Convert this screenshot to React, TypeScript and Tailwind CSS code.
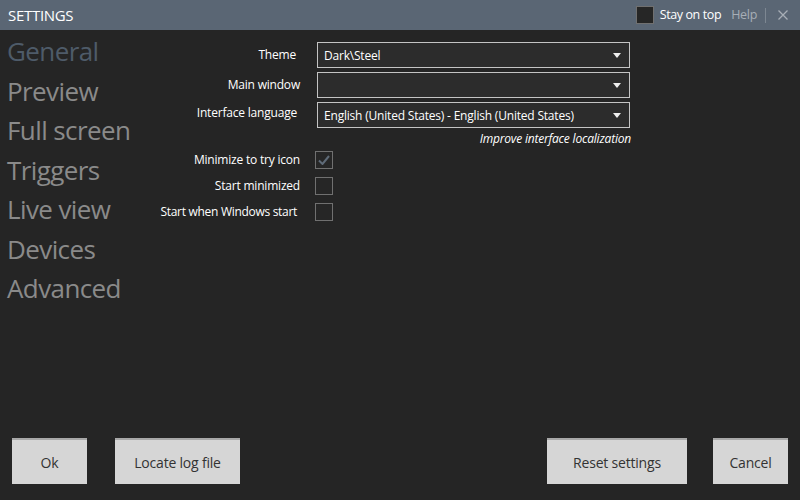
import React from "react";

const font = { fontFamily: '"Open Sans", "Noto Sans", sans-serif' };

function Select({ value }: { value: string }) {
  return (
    <div className="w-[313px] h-[26px] border border-[#c4c4c4] bg-[#2c2c2c] flex items-center justify-between pl-[6px] pr-[8px]">
      <span className="text-[12px] text-white tracking-[-0.2px] pt-[1px]">{value}</span>
      <svg width="8" height="5" viewBox="0 0 8 5"><path d="M0 0H8L4 5Z" fill="#eee" /></svg>
    </div>
  );
}

function Check({ checked }: { checked?: boolean }) {
  return (
    <div className="w-[18px] h-[18px] border border-[#707070] bg-[#262626] flex items-center justify-center">
      {checked && (
        <svg width="12" height="10" viewBox="0 0 12 10">
          <path d="M1 5.5L4.5 9L11 1" stroke="#5f6b78" strokeWidth="2" fill="none" />
        </svg>
      )}
    </div>
  );
}

export default function App() {
  const nav = ["General", "Preview", "Full screen", "Triggers", "Live view", "Devices", "Advanced"];
  return (
    <div className="w-[800px] h-[500px] bg-[#252525] flex flex-col overflow-hidden" style={font}>
      <div className="h-[30px] bg-[#5a6674] flex items-center pl-[8px] pr-[12px] shrink-0">
        <span className="text-[15px] text-white tracking-[-0.3px]">SETTINGS</span>
        <div className="ml-auto flex items-center">
          <div className="w-[18px] h-[18px] bg-[#262626] border border-[#707070]" />
          <span className="ml-[6px] text-[12.5px] text-white tracking-[-0.4px]">Stay on top</span>
          <span className="ml-[10px] text-[12.5px] text-[#a7aeb6] tracking-[-0.3px]">Help</span>
          <div className="ml-[8px] w-px h-[15px] bg-[#7d8792]" />
          <svg className="ml-[12px]" width="10" height="10" viewBox="0 0 10 10">
            <path d="M0.5 0.5L9.5 9.5M9.5 0.5L0.5 9.5" stroke="#a7aeb6" strokeWidth="1.3" />
          </svg>
        </div>
      </div>
      <div className="flex-1 flex">
        <div className="w-[150px] pl-[7px] pt-[2px] flex flex-col">
          {nav.map((n, i) => (
            <div
              key={n}
              className={`h-[39.5px] leading-[39.5px] text-[26px] tracking-[-0.6px] ${i === 0 ? "text-[#4e5b69]" : "text-[#8a8a8a]"}`}
            >
              {n}
            </div>
          ))}
        </div>
        <div className="flex flex-col pt-[12px]">
          <div className="grid grid-cols-[150px_313px] gap-x-[17px] gap-y-[4px] items-center">
            <div className="text-right text-[12px] text-white tracking-[-0.2px] pr-[4px]">Theme</div>
            <Select value="Dark\Steel" />
            <div className="text-right text-[12px] text-white tracking-[-0.2px]">Main window</div>
            <Select value="" />
            <div className="text-right text-[12px] text-white tracking-[-0.2px] pr-[3px] self-start pt-[2px]">Interface language</div>
            <Select value="English (United States) - English (United States)" />
          </div>
          <div className="text-right text-[12px] italic text-white tracking-[-0.2px] w-[481px] mt-[2px]">
            Improve interface localization
          </div>
          <div className="grid grid-cols-[150px_18px] gap-x-[15px] gap-y-[8px] items-center mt-[3px]">
            <div className="text-right text-[12px] text-white tracking-[-0.2px]">Minimize to try icon</div>
            <Check checked />
            <div className="text-right text-[12px] text-white tracking-[-0.2px]">Start minimized</div>
            <Check />
            <div className="text-right text-[12px] text-white tracking-[-0.3px] pr-[3px] whitespace-nowrap">Start when Windows start</div>
            <Check />
          </div>
        </div>
      </div>
      <div className="h-[62px] flex px-[12px] pb-[16px] shrink-0">
        <div className="flex gap-[28px]">
          <button className="w-[75px] h-[46px] bg-[#d6d6d6] border-t-2 border-[#a8a8a8] text-[14px] text-[#333] tracking-[-0.2px]">Ok</button>
          <button className="w-[125px] h-[46px] bg-[#d6d6d6] border-t-2 border-[#a8a8a8] text-[14px] text-[#333] tracking-[-0.2px]">Locate log file</button>
        </div>
        <div className="ml-auto flex gap-[26px]">
          <button className="w-[140px] h-[46px] bg-[#d6d6d6] border-t-2 border-[#a8a8a8] text-[14px] text-[#333] tracking-[-0.2px]">Reset settings</button>
          <button className="w-[75px] h-[46px] bg-[#d6d6d6] border-t-2 border-[#a8a8a8] text-[14px] text-[#333] tracking-[-0.2px]">Cancel</button>
        </div>
      </div>
    </div>
  );
}
